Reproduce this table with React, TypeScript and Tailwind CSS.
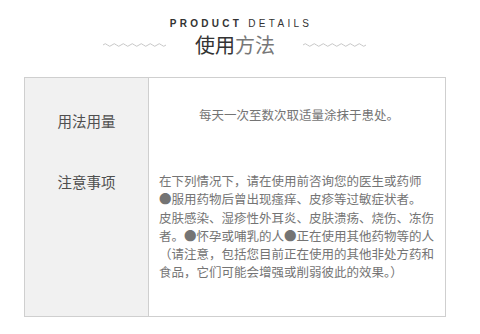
const lines = [
  '在下列情况下，请在使用前咨询您的医生或药师',
  '●服用药物后曾出现瘙痒、皮疹等过敏症状者。',
  '皮肤感染、湿疹性外耳炎、皮肤溃疡、烧伤、冻伤',
  '者。●怀孕或哺乳的人●正在使用其他药物等的人',
  '（请注意，包括您目前正在使用的其他非处方药和',
  '食品，它们可能会增强或削弱彼此的效果。）',
];

function Wave() {
  return (
    <svg width="64" height="6" viewBox="0 0 64 6" fill="none">
      <path
        d="M0 3 q2.25 -2.6 4.5 0 t4.5 0 t4.5 0 t4.5 0 t4.5 0 t4.5 0 t4.5 0 t4.5 0 t4.5 0 t4.5 0 t4.5 0 t4.5 0 t4.5 0 t4.5 0"
        stroke="#c8c8c8"
        strokeWidth="1"
      />
    </svg>
  );
}

export default function App() {
  return (
    <div className="w-[480px] h-[334px] bg-white overflow-hidden font-['Noto_Sans_CJK_SC','Noto_Sans',sans-serif]">
      {/* Header */}
      <div className="pt-[18px] flex justify-center pl-[2px]">
        <span className="font-['Liberation_Sans',sans-serif] text-[10px] leading-[12px] tracking-[3.3px] text-[#333]">
          <span className="font-bold">PRODUCT</span> DETAILS
        </span>
      </div>
      <div className="mt-[3px] flex items-center justify-center gap-[28px] pr-[10px]">
        <Wave />
        <div className="text-[20px] leading-[24px]">
          <span className="text-[#333]">使用</span>
          <span className="text-[#777]">方法</span>
        </div>
        <Wave />
      </div>

      {/* Table */}
      <div className="ml-[24px] mt-[20px] w-[422px] h-[240px] border border-[#cfcfcf] grid grid-cols-[124px_1fr] grid-rows-[94px_1fr]">
        <div className="bg-[#f1f1f1] border-r border-[#cfcfcf] pt-[33px] text-center text-[14.5px] leading-[20px] text-[#4f4f4f]">
          用法用量
        </div>
        <div className="pt-[28px] pl-[4px] text-center text-[12.5px] leading-[18px] text-[#747474]">
          每天一次至数次取适量涂抹于患处。
        </div>
        <div className="bg-[#f1f1f1] border-r border-[#cfcfcf] text-center text-[14.5px] leading-[20px] text-[#4f4f4f]">
          注意事项
        </div>
        <div className="pl-[10px] text-[12.5px] leading-[18.3px] text-[#747474]">
          {lines.map((l) => (
            <div key={l} className="whitespace-nowrap">
              {l}
            </div>
          ))}
        </div>
      </div>
    </div>
  );
}
